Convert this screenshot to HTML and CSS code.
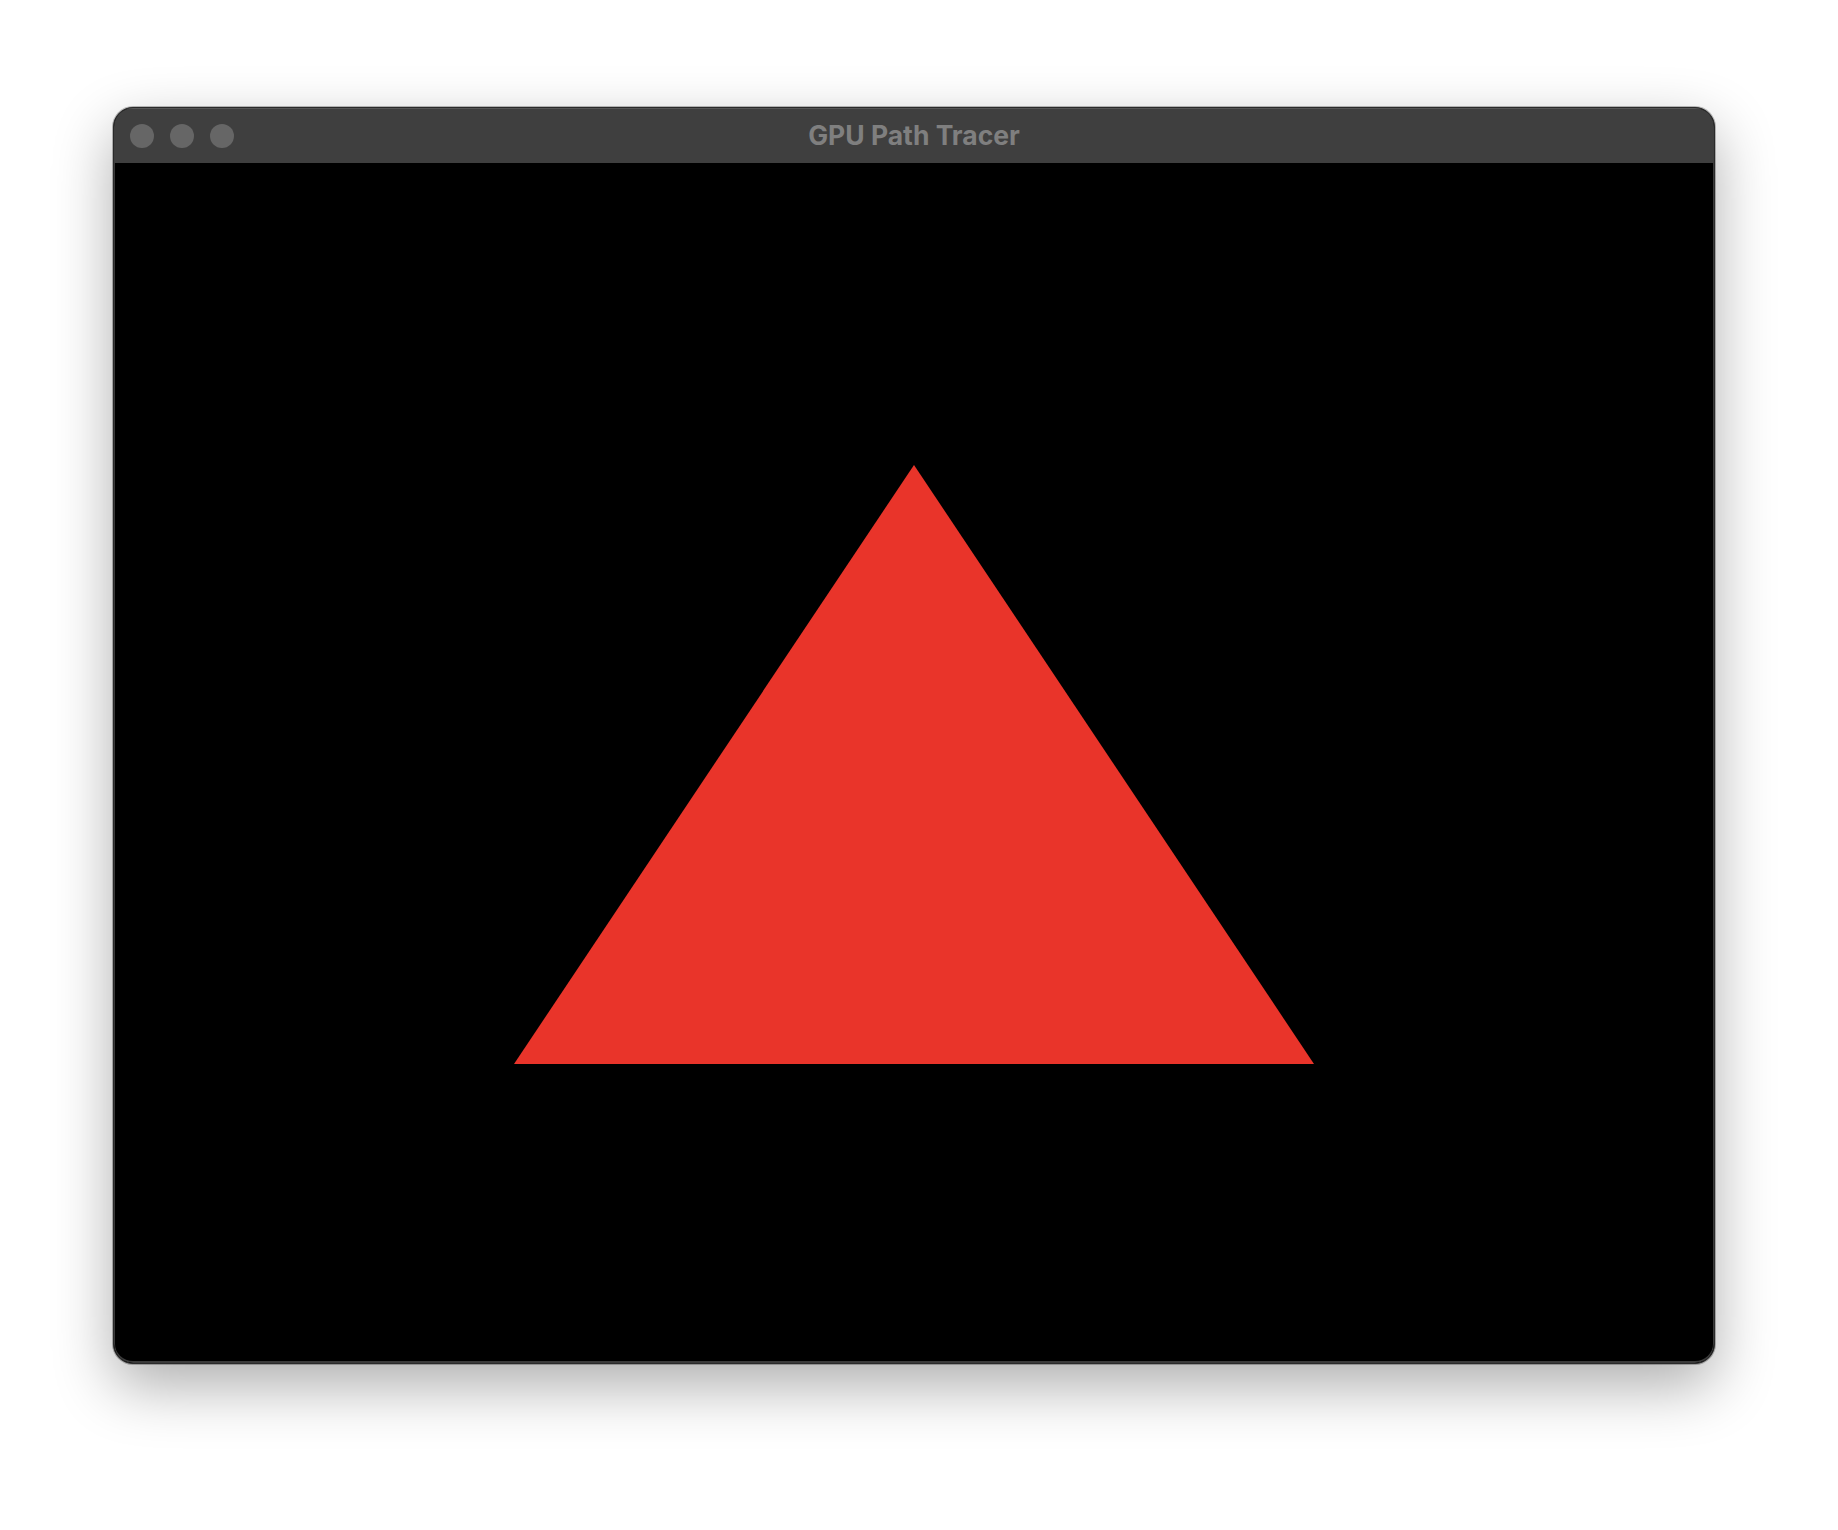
FILE: index.html
```html
<!DOCTYPE html>
<html>
<head>
<meta charset="utf-8">
<link rel="stylesheet" href="styles.css">
</head>
<body>
<div class="window">
  <div class="titlebar">
    <div class="lights">
      <span class="light"></span>
      <span class="light"></span>
      <span class="light"></span>
    </div>
    <div class="title">GPU Path Tracer</div>
  </div>
  <div class="content">
    <svg class="scene" width="1600" height="1200" viewBox="0 0 1600 1200">
      <polygon points="799,302 399,901 1199,901" fill="#e9342a"/>
    </svg>
  </div>
</div>
</body>
</html>
```
FILE: styles.css
```css
html, body {
  margin: 0;
  padding: 0;
  background: #ffffff;
  width: 1838px;
  height: 1530px;
  overflow: hidden;
}
body {
  padding: 107px 0 0 113px;
  box-sizing: border-box;
}
.window {
  width: 1602px;
  height: 1257px;
  box-sizing: border-box;
  border: 1px solid #2a2a2a;
  border-radius: 20px;
  overflow: hidden;
  display: flex;
  flex-direction: column;
  background: #000;
  box-shadow: 0 22px 60px rgba(0,0,0,0.32), 0 0 0 1px rgba(0,0,0,0.25);
}
.titlebar {
  position: relative;
  height: 55px;
  flex: none;
  background: #3f3f3f;
  box-shadow: inset 0 1px 0 rgba(255,255,255,0.12);
  display: flex;
  align-items: center;
  justify-content: center;
}
.lights {
  position: absolute;
  left: 16px;
  top: 16px;
  display: flex;
  gap: 16px;
}
.light {
  width: 24px;
  height: 24px;
  border-radius: 50%;
  background: #666666;
}
.title {
  font-family: Inter, "Liberation Sans", sans-serif;
  font-weight: 700;
  font-size: 26.5px;
  color: #7f7f7f;
  line-height: 1;
  margin-top: -1px;
}
.content {
  flex: 1;
  background: #000;
  border-left: 1px solid #3a3a3a;
  border-right: 1px solid #3a3a3a;
  border-bottom: 2px solid #3a3a3a;
  border-radius: 0 0 19px 19px;
  overflow: hidden;
}
.scene {
  display: block;
}
```
